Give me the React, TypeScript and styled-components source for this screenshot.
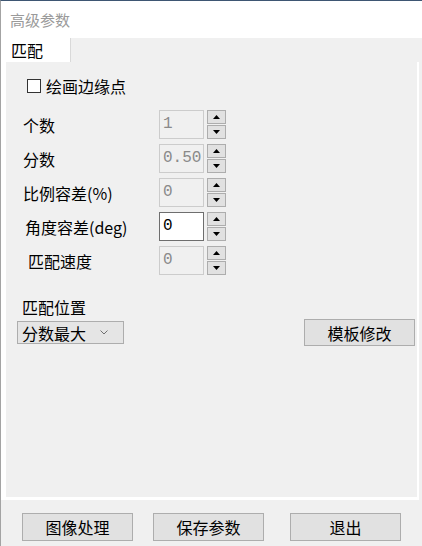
import React from "react";
import styled, { createGlobalStyle } from "styled-components";

const Global = createGlobalStyle`
  html, body { margin: 0; padding: 0; background: #f0f0f0; }
  body { font-family: "Noto Sans CJK SC", "Noto Sans", sans-serif; }
  * { box-sizing: border-box; }
`;

const Window = styled.div`
  width: 422px;
  height: 546px;
  border-top: 1px solid #3e5673;
  border-left: 1px solid #a3a3a3;
  display: flex;
  flex-direction: column;
  background: #f0f0f0;
  overflow: hidden;
`;

const TitleBar = styled.div`
  height: 37px;
  flex: none;
  background: #ffffff;
  display: flex;
  align-items: center;
  padding-left: 9px;
  font-size: 15px;
  color: #9a9a9a;
`;

const TabStrip = styled.div`
  height: 24px;
  flex: none;
  display: flex;
`;

const Tab = styled.div`
  width: 70px;
  height: 24px;
  background: #ffffff;
  border-right: 1px solid #d9d9d9;
  padding-left: 10px;
  font-size: 16px;
  line-height: 24px;
  color: #000;
`;

const TabPanel = styled.div`
  width: 418px;
  height: 438px;
  flex: none;
  border-left: 5px solid #ffffff;
  border-right: 2px solid #ffffff;
  border-bottom: 3px solid #ffffff;
  background: #f0f0f0;
  display: flex;
  flex-direction: column;
`;

const CheckRow = styled.label`
  margin-top: 14px;
  height: 20px;
  padding-left: 21px;
  display: flex;
  align-items: center;
  gap: 5px;
  font-size: 16px;
  line-height: 20px;
  color: #000;
`;

const CheckBox = styled.span`
  width: 14px;
  height: 14px;
  border: 1px solid #333333;
  background: #ffffff;
  flex: none;
`;

const SpinList = styled.div`
  margin-top: 14px;
  display: flex;
  flex-direction: column;
  gap: 5px;
`;

const SpinRow = styled.div`
  display: grid;
  grid-template-columns: 150px 45px 19px;
  column-gap: 3px;
  height: 29px;
  align-items: center;
`;

const FieldLabel = styled.span<{ $indent: number }>`
  padding-left: ${(p) => p.$indent}px;
  font-size: 16px;
  line-height: 20px;
  color: #000;
  white-space: nowrap;
`;

const NumBox = styled.div<{ $active?: boolean }>`
  height: 29px;
  border: 1px solid ${(p) => (p.$active ? "#6e6e6e" : "#cccccc")};
  background: ${(p) => (p.$active ? "#ffffff" : "#f0f0f0")};
  color: ${(p) => (p.$active ? "#000000" : "#8a8a8a")};
  font-family: "Liberation Mono", "DejaVu Sans Mono", monospace;
  font-size: 16px;
  line-height: 24px;
  padding-left: 3px;
  padding-top: 1px;
`;

const Spinner = styled.div`
  height: 29px;
  display: flex;
  flex-direction: column;
  gap: 1px;
`;

const SpinButton = styled.div`
  flex: 1;
  border: 1px solid #adadad;
  background: #e1e1e1;
  display: flex;
  align-items: center;
  justify-content: center;
`;

const SectionLabel = styled.div`
  margin-top: 22px;
  padding-left: 16px;
  font-size: 16px;
  line-height: 20px;
  color: #000;
`;

const PositionRow = styled.div`
  margin-top: 2px;
  padding-left: 11px;
  padding-right: 2px;
  display: flex;
  align-items: flex-start;
  justify-content: space-between;
`;

const Select = styled.div`
  margin-top: 2px;
  width: 107px;
  height: 23px;
  border: 1px solid #adadad;
  background: #e5e5e5;
  padding-left: 4px;
  padding-right: 15px;
  display: flex;
  align-items: center;
  justify-content: space-between;
  font-size: 16px;
  color: #000;
`;

const Button = styled.div<{ $shift?: number }>`
  width: 111px;
  height: ${(p) => (p.$shift !== undefined ? 28 : 27)}px;
  margin-left: ${(p) => p.$shift ?? 0}px;
  border: 1px solid #adadad;
  background: #e1e1e1;
  display: flex;
  align-items: center;
  justify-content: center;
  font-size: 16px;
  color: #000;
`;

const Footer = styled.div`
  flex: 1;
  padding-top: 13px;
  padding-left: 21px;
  display: flex;
  align-items: flex-start;
`;

const Arrow = ({ up }: { up?: boolean }) => (
  <svg width="7" height="4" viewBox="0 0 7 4">
    <polygon points={up ? "0,4 3.5,0 7,4" : "0,0 7,0 3.5,4"} fill="#000" />
  </svg>
);

const Chevron = () => (
  <svg width="8" height="5" viewBox="0 0 8 5">
    <polyline points="0.5,0.5 4,4 7.5,0.5" fill="none" stroke="#707070" strokeWidth="1" />
  </svg>
);

const rows = [
  { label: "个数", value: "1", indent: 17 },
  { label: "分数", value: "0.50", indent: 17 },
  { label: "比例容差(%)", value: "0", indent: 17 },
  { label: "角度容差(deg)", value: "0", indent: 19, active: true },
  { label: "匹配速度", value: "0", indent: 22 },
];

export default function App() {
  return (
    <>
      <Global />
      <Window>
        <TitleBar>高级参数</TitleBar>
        <TabStrip>
          <Tab>匹配</Tab>
        </TabStrip>
        <TabPanel>
          <CheckRow>
            <CheckBox />
            绘画边缘点
          </CheckRow>
          <SpinList>
            {rows.map((r) => (
              <SpinRow key={r.label}>
                <FieldLabel $indent={r.indent}>{r.label}</FieldLabel>
                <NumBox $active={r.active}>{r.value}</NumBox>
                <Spinner>
                  <SpinButton>
                    <Arrow up />
                  </SpinButton>
                  <SpinButton>
                    <Arrow />
                  </SpinButton>
                </Spinner>
              </SpinRow>
            ))}
          </SpinList>
          <SectionLabel>匹配位置</SectionLabel>
          <PositionRow>
            <Select>
              <span>分数最大</span>
              <Chevron />
            </Select>
            <Button>模板修改</Button>
          </PositionRow>
        </TabPanel>
        <Footer>
          <Button $shift={0}>图像处理</Button>
          <Button $shift={20}>保存参数</Button>
          <Button $shift={26}>退出</Button>
        </Footer>
      </Window>
    </>
  );
}
